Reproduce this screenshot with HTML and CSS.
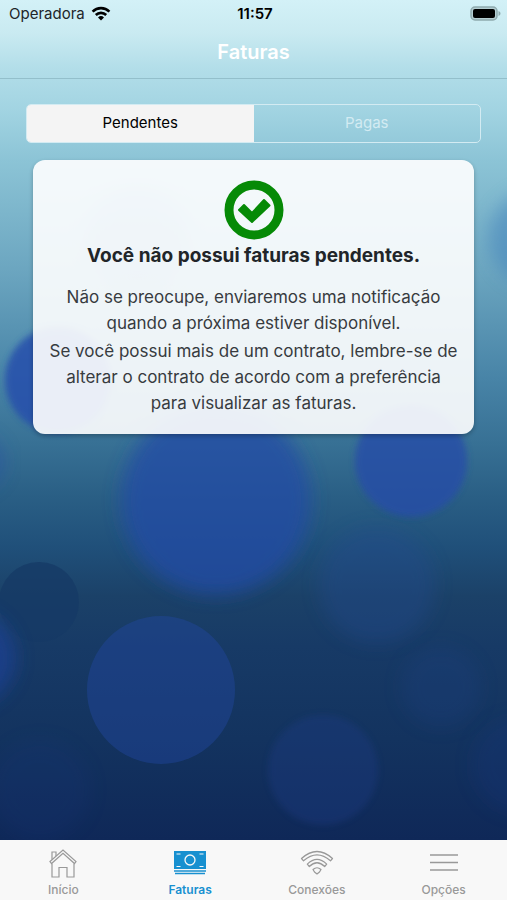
FILE: index.html
```html
<!DOCTYPE html>
<html lang="pt-BR">

<head>
    <meta charset="UTF-8">
    <meta name="viewport" content="width=device-width, initial-scale=1.0">
    <title>Faturas</title>
    <link rel="stylesheet" href="styles.css">
</head>

<body>
    <div class="screen">
        <svg class="bubbles" viewBox="0 0 507 840" preserveAspectRatio="xMidYMin slice" aria-hidden="true">
            <defs>
                <filter id="soft" x="-30%" y="-30%" width="160%" height="160%">
                    <feGaussianBlur stdDeviation="9" />
                </filter>
                <filter id="slight" x="-20%" y="-20%" width="140%" height="140%">
                    <feGaussianBlur stdDeviation="3" />
                </filter>
            </defs>
            <circle cx="137" cy="238" r="52" fill="#2a50b0" opacity=".2" filter="url(#soft)" />
            <circle cx="58" cy="380" r="53" fill="#2850ac" opacity=".85" filter="url(#slight)" />
            <circle cx="537" cy="238" r="48" fill="#4080bc" opacity=".5" filter="url(#soft)" />
            <circle cx="-24" cy="462" r="28" fill="#2850a4" opacity=".5" filter="url(#soft)" />
            <circle cx="216" cy="500" r="95" fill="#234ca6" opacity=".75" filter="url(#soft)" />
            <circle cx="411" cy="461" r="56" fill="#264ea8" opacity=".8" filter="url(#slight)" />
            <circle cx="377" cy="585" r="58" fill="#244a8c" opacity=".4" filter="url(#soft)" />
            <circle cx="39" cy="602" r="40" fill="#153a66" opacity=".75" />
            <circle cx="-32" cy="658" r="48" fill="#1e429a" opacity=".65" filter="url(#soft)" />
            <circle cx="161" cy="690" r="74" fill="#2247a0" opacity=".45" />
            <circle cx="441" cy="687" r="40" fill="#1f3f80" opacity=".3" filter="url(#soft)" />
            <circle cx="323" cy="770" r="55" fill="#1b3a82" opacity=".4" filter="url(#slight)" />
            <circle cx="520" cy="765" r="48" fill="#17367a" opacity=".3" filter="url(#soft)" />
            <circle cx="40" cy="790" r="50" fill="#16347a" opacity=".2" filter="url(#soft)" />
        </svg>

        <header class="header">
            <div class="status-bar">
                <div class="carrier">
                    <span>Operadora</span>
                    <svg width="20" height="15" viewBox="0 0 20 15" fill="none" stroke="#000" stroke-width="2.6" aria-hidden="true">
                        <path d="M1.6 5.6a12 12 0 0 1 16.8 0" />
                        <path d="M4.8 9a7.4 7.4 0 0 1 10.4 0" />
                        <path d="M10 14.4 7 11.4a4.3 4.3 0 0 1 6 0z" fill="#000" stroke="none" />
                    </svg>
                </div>
                <time class="clock">11:57</time>
                <svg class="battery" width="31" height="15" viewBox="0 0 31 15" aria-hidden="true">
                    <rect x="1" y="1" width="26" height="13" rx="4" fill="#b5ced2" stroke="#8faaae" stroke-width="1.5" />
                    <rect x="3" y="3" width="22" height="9" rx="2" fill="#000" />
                    <path d="M28.5 5v5c1.2-.4 2-1.4 2-2.5s-.8-2.1-2-2.5z" fill="#8faaae" />
                </svg>
            </div>
            <h1 class="title">Faturas</h1>
        </header>

        <main class="content">
            <div class="segment">
                <button type="button" class="segment-button active" aria-pressed="true">Pendentes</button>
                <button type="button" class="segment-button" aria-pressed="false">Pagas</button>
            </div>

            <section class="card">
                <svg class="check" width="60" height="60" viewBox="0 0 60 60" aria-hidden="true">
                    <circle cx="30" cy="30" r="25" fill="none" stroke="#068a06" stroke-width="9" />
                    <path d="M15 30 20 25 28 33 40 20 45.500 25.500 28 42z" fill="#068a06" stroke="#068a06" stroke-width="2" stroke-linejoin="round" />
                </svg>
                <h2>Você não possui faturas pendentes.</h2>
                <p>Não se preocupe, enviaremos uma notificação quando a próxima estiver disponível.</p>
                <p>Se você possui mais de um contrato, lembre-se de alterar o contrato de acordo com a preferência para visualizar as faturas.</p>
            </section>
        </main>
    </div>

    <nav class="tab-bar">
        <a href="#inicio" class="tab">
            <svg width="34" height="32" viewBox="0 0 34 32" fill="none" stroke="currentColor" stroke-width="1.2" aria-hidden="true">
                <path d="M4 14.5 17 3 30 14.5 28.5 16.5 17 6.3 5.5 16.5z" />
                <path d="M6 12.5V5h4v4" />
                <path d="M6 16.5V30h7V20.5h8V30h7V16.5" />
            </svg>
            <span>Início</span>
        </a>
        <a href="#faturas" class="tab active" aria-current="page">
            <svg width="34" height="32" viewBox="0 0 34 32" fill="none" stroke="currentColor" aria-hidden="true">
                <rect x="1" y="4" width="32" height="18" fill="currentColor" stroke="none" />
                <path d="M1 24h32M2 26.5h30" stroke-width="1.5" />
                <circle cx="17" cy="13" r="5" stroke="#f8f8f8" stroke-width="1.3" />
                <path d="M3.5 7h4M26.5 7h4M3.5 19.5h4M26.5 19.5h4" stroke="#f8f8f8" stroke-width="1.2" />
            </svg>
            <span>Faturas</span>
        </a>
        <a href="#conexoes" class="tab">
            <svg width="34" height="32" viewBox="0 0 34 32" fill="none" stroke="currentColor" stroke-width="1.2" stroke-linejoin="round" aria-hidden="true">
                <path d="M1.5 11.5Q17-2.5 32.5 11.5L30.5 13.8Q17 1.8 3.5 13.800z" />
                <path d="M7.3 17.2Q17 7.5 26.7 17.2L24.7 19.5Q17 12 9.3 19.5z" />
                <path d="M13 22.5Q17 19 21 22.5L19.5 25 17 27 14.5 25z" />
            </svg>
            <span>Conexões</span>
        </a>
        <a href="#opcoes" class="tab">
            <svg width="34" height="32" viewBox="0 0 34 32" fill="none" stroke="currentColor" stroke-width="1.5" aria-hidden="true">
                <path d="M3 8h28M3 15.5h28M3 23h28" />
            </svg>
            <span>Opções</span>
        </a>
    </nav>
</body>

</html>
```

FILE: styles.css
```css
* {
    box-sizing: border-box;
}
body {
    display: flex;
    flex-direction: column;
    min-height: 100vh;
    margin: 0;
    font-family: Inter, "Liberation Sans", sans-serif;
    color: #212529;
}
.screen {
    position: relative;
    flex: 1;
    overflow: hidden;
    background: linear-gradient(#d3f1f7 0%, #c9eaf1 4%, #b3dee9 8%, #a2d4e2 13%, #8cc4d6 19%, #6ca6c0 32%, #4884a7 45%, #377094 53%, #2a5f85 59%, #20507a 65%, #1b4168 71%, #173a66 77%, #13335f 88%, #0f2858 100%);
}
.bubbles {
    position: absolute;
    top: 0;
    left: 0;
    width: 100%;
    height: 100%;
}
.header {
    position: relative;
    border-bottom: 1px solid #93bfcb;
}
.status-bar {
    display: grid;
    grid-template-columns: 1fr auto 1fr;
    align-items: center;
    height: 26px;
    padding: 0 6px 0 9px;
    font-size: 15px;
}
.carrier {
    display: flex;
    align-items: center;
    gap: 6px;
}
.clock {
    font-weight: 600;
    color: #000;
}
.battery {
    justify-self: end;
}
.title {
    margin: 0;
    font-size: 20px;
    font-weight: 600;
    line-height: 52px;
    text-align: center;
    color: #fff;
}
.content {
    position: relative;
    padding: 25px 26px;
}
.segment {
    display: flex;
    height: 39px;
    border: 1px solid #d3ebf2;
    border-radius: 5px;
    overflow: hidden;
}
.segment-button {
    flex: 1;
    padding: 0 0 2px;
    border: 0;
    background: transparent;
    font-family: inherit;
    font-size: 15px;
    color: #d3ebf2;
}
.segment-button.active {
    background: #f4f4f4;
    color: #000;
}
.card {
    margin: 17px 7px 0;
    padding: 20px 16px 16px;
    border-radius: 12px;
    background: rgba(255, 255, 255, 0.9);
    box-shadow: 0 2px 4px rgba(0, 0, 0, 0.25);
    text-align: center;
}
.check {
    display: block;
    margin: 0 auto;
}
.card h2 {
    margin: 0 0 12px;
    font-size: 19px;
    font-weight: 700;
    line-height: 32px;
}
.card p {
    margin: 0 0 2px;
    font-size: 17px;
    line-height: 26px;
    color: #373b3f;
}
.tab-bar {
    display: flex;
    min-height: 60px;
    background: #f8f8f8;
}
.tab {
    display: flex;
    flex: 1;
    flex-direction: column;
    align-items: center;
    gap: 1px;
    padding-top: 7px;
    font-size: 12px;
    font-weight: 500;
    line-height: 20px;
    text-decoration: none;
    color: #999;
}
.tab svg {
    flex-shrink: 0;
}
.tab.active {
    font-weight: 600;
    color: #1890d0;
}
```
